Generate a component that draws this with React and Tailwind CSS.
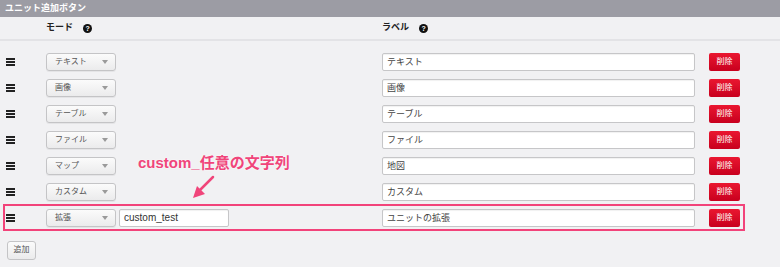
import React from 'react';

const rows = [
    { mode: 'テキスト', label: 'テキスト' },
    { mode: '画像', label: '画像' },
    { mode: 'テーブル', label: 'テーブル' },
    { mode: 'ファイル', label: 'ファイル' },
    { mode: 'マップ', label: '地図' },
    { mode: 'カスタム', label: 'カスタム' },
    { mode: '拡張', label: 'ユニットの拡張', custom: 'custom_test' },
];

const font = { fontFamily: '"Liberation Sans", "Noto Sans CJK JP", sans-serif' };

function Help() {
    return (
        <span className="inline-flex items-center justify-center w-[9px] h-[9px] rounded-full bg-[#111] text-white text-[7px] font-bold leading-none ml-[10px]">?</span>
    );
}

function Handle() {
    return (
        <div className="flex flex-col gap-[1px] w-[9px] ml-[6px]">
            <span className="h-[2px] bg-[#222]" />
            <span className="h-[2px] bg-[#222]" />
            <span className="h-[2px] bg-[#222]" />
        </div>
    );
}

function Select({ value }) {
    return (
        <div className="w-[70px] h-[18px] rounded-[3px] border border-[#c4c4c6] bg-gradient-to-b from-[#fbfbfb] to-[#ebebec] flex items-center justify-between pl-[8px] pr-[7px] shadow-[0_1px_0_rgba(0,0,0,0.05)]">
            <span className="text-[8px] text-[#555] leading-none">{value}</span>
            <span className="w-0 h-0 border-l-[3px] border-r-[3px] border-t-[4px] border-l-transparent border-r-transparent border-t-[#9a9a9a]" />
        </div>
    );
}

function TextInput({ value, className, textClass }) {
    return (
        <div className={`h-[18px] rounded-[2px] border border-[#c6c6c8] bg-white flex items-center pl-[4px] shadow-[inset_0_1px_1px_rgba(0,0,0,0.06)] ${className}`}>
            <span className={`leading-none ${textClass}`}>{value}</span>
        </div>
    );
}

function Row({ row }) {
    return (
        <div className="grid grid-cols-[46px_336px_327px_1fr] items-center h-[26px]">
            <Handle />
            <div className="flex items-center">
                <Select value={row.mode} />
                {row.custom && (
                    <TextInput value={row.custom} className="w-[110px] ml-[3px]" textClass="text-[10px] text-[#333]" />
                )}
            </div>
            <TextInput value={row.label} className="w-[313px]" textClass="text-[9px] text-[#444]" />
            <button className="w-[31px] h-[18px] rounded-[2px] bg-gradient-to-b from-[#ea1630] to-[#c8001e] text-white text-[8px] leading-none flex items-center justify-center">
                削除
            </button>
        </div>
    );
}

export default function App() {
    return (
        <div className="w-[780px] h-[267px] bg-[#f1f1f3] overflow-hidden relative" style={font}>
            {/* Header */}
            <div className="h-[17px] bg-[#9c9ca4] flex items-center pl-[5px]">
                <span className="text-white text-[9px] font-bold leading-none">ユニット追加ボタン</span>
            </div>

            {/* Column titles */}
            <div className="grid grid-cols-[46px_336px_327px_1fr] items-center h-[24px] border-b-2 border-[#e3e3e6]">
                <div />
                <div className="flex items-center text-[9px] font-bold text-[#222]">モード<Help /></div>
                <div className="flex items-center text-[9px] font-bold text-[#222]">ラベル<Help /></div>
                <div />
            </div>

            {/* Rows */}
            <div className="pt-2">
                {rows.map((row, i) => (
                    <div key={i} className="relative">
                        <Row row={row} />
                        {row.custom && (
                            <span className="absolute left-[3px] top-[-1px] w-[742px] h-[27px] border-2 border-[#f2437a] pointer-events-none" />
                        )}
                    </div>
                ))}
            </div>

            <div className="pl-[7px] mt-[4px]">
                <button className="w-[29px] h-[19px] rounded-[3px] border border-[#c4c4c6] bg-gradient-to-b from-[#fbfbfb] to-[#ebebec] text-[8px] text-[#555] leading-none">
                    追加
                </button>
            </div>

            {/* Annotation */}
            <div className="absolute left-[138px] top-[154px] text-[15px] font-bold leading-[17px] text-[#f0457a] [text-shadow:0_0_2px_#fff]">
                custom_任意の文字列
            </div>
            <svg className="absolute left-[188px] top-[172px]" width="30" height="30" viewBox="0 0 30 30">
                <line x1="25" y1="5" x2="11" y2="19" stroke="#f0457a" strokeWidth="2.5" strokeLinecap="round" />
                <polygon points="5,26 9,14 17,22" fill="#f0457a" />
            </svg>
        </div>
    );
}
